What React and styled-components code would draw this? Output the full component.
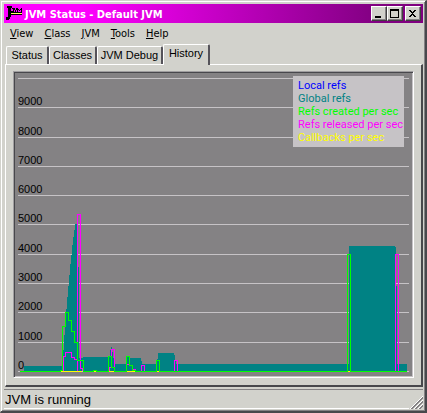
import React, { useState } from "react";
import styled, { createGlobalStyle, css } from "styled-components";

const FACE = "#d2d2cc";
const UI = `"Liberation Sans", Arial, sans-serif`;
const SHELL = `"DejaVu Sans Condensed", Tahoma, sans-serif`;

const GlobalStyle = createGlobalStyle`
  * { box-sizing: border-box; }
  html, body, #root { height: 100%; }
  body { margin: 0; background: ${FACE}; color: #000; font: 11px/13px ${UI}; }
  button { font: inherit; color: inherit; padding: 0; margin: 0; }
`;

const Window = styled.main`
  min-height: 100%;
  display: flex;
  flex-direction: column;
  padding: 2px 1px 0 2px;
  background: ${FACE};
  border: 1px solid #d2d2cc;
  border-right: 2px solid #48484c;
  border-bottom: 2px solid #48484c;
  box-shadow: inset 1px 1px #fff, inset -1px -1px #848284;
`;

const TitleBar = styled.header`
  display: flex;
  align-items: center;
  height: 19px;
  margin: 1px 1px 0;
  padding: 0 2px;
  background: linear-gradient(90deg, #ff00ff, #ff00ff 18%, #800080 90%);
  color: #fff;
`;

const Title = styled.h1`
  flex: 1;
  margin: 0 0 0 3px;
  padding-top: 1px;
  font: bold 11px/19px ${SHELL};
`;

const Caption = styled.div`
  display: flex;
`;

const CaptionButton = styled.button`
  display: block;
  width: 16px;
  height: 15px;
  margin-left: ${(p) => (p.$apart ? 2 : 0)}px;
  background: ${FACE};
  border: 1px solid;
  border-color: #fff #404040 #404040 #fff;
  box-shadow: inset -1px -1px #848284;
  svg { display: block; }
`;

const MenuBar = styled.nav`
  display: flex;
  height: 21px;
  gap: 11px;
  padding: 3px 7px;
`;

const MenuItem = styled.button`
  border: 0;
  background: none;
  font: 11px/15px ${SHELL};
`;

const TabRow = styled.div`
  display: flex;
  align-items: flex-end;
  height: 20px;
  margin: 0 3px;
`;

const Tab = styled.button`
  position: relative;
  height: 18px;
  width: ${(p) => p.$width}px;
  white-space: nowrap;
  background: ${FACE};
  border: 1px solid #fff;
  border-right: 2px solid #55535a;
  border-bottom: 0;
  border-radius: 2px 2px 0 0;
  font: 11px/17px ${UI};
  ${(p) =>
    p.$active &&
    css`
      height: 21px;
      margin-bottom: -1px;
      padding-bottom: 3px;
      z-index: 1;
    `}
`;

const Panel = styled.section`
  flex: 1;
  display: flex;
  margin: 0 1px 0 2px;
  padding: 6px 7px 7px;
  border: 1px solid #fff;
  border-right: 2px solid #48484c;
  border-bottom: 2px solid #48484c;
`;

const ChartFrame = styled.div`
  position: relative;
  flex: 1;
  padding: 1px;
  background: #848284;
  border: 1px solid;
  border-color: #a09ea0 #fff #fff #a09ea0;
  box-shadow: inset 1px 1px #48484c, inset -1px -1px #c6c3c6;
`;

const Chart = styled.svg`
  display: block;
  width: 100%;
  height: 100%;
  font: 11px ${UI};
`;

const Legend = styled.ul`
  position: absolute;
  top: 4px;
  right: 9px;
  margin: 0;
  padding: 3px 1px 3px 5px;
  list-style: none;
  background: #c6c3c6;
  font: 11px/13px Roboto, ${UI};
`;

const LegendItem = styled.li`
  color: ${(p) => p.$color};
  white-space: nowrap;
`;

const StatusBar = styled.footer`
  display: flex;
  height: 20px;
  margin: 2px 1px;
  border-top: 1px solid #848284;
`;

const StatusText = styled.span`
  flex: 1;
  padding-left: 1px;
  border-bottom: 1px solid #fff;
  font: 13px/19px ${UI};
`;

const Grip = styled.svg`
  align-self: flex-end;
`;

const AppIcon = () => (
  <svg width="16" height="16" viewBox="0 0 16 16" shapeRendering="crispEdges" aria-hidden="true">
    <path d="M1 0h5v2H5v9H4v2H3v1H0v-3h2V2H1z" fill="#000" />
    <path
      d="M6 2h2v4H5V5h2V3H6zM8 2h1v2h1V2h1v2h-1v2H9V4H8zM11 2h1v1h1v1h1V3h1V2h1v4h-1V4h-1v1h-1V4h-1v2h-1z"
      fill="#000"
    />
    <path d="M5 7h11v1H5z" fill="#ffff60" />
    <path d="M5 6h11v1H5zM5 8h11v1H5z" fill="#000" />
  </svg>
);

const glyphs = {
  Minimize: <path d="M3 9h6v2H3z" />,
  Maximize: <path fillRule="evenodd" d="M2 2h9v9H2zM3 4v6h7V4z" />,
  Close: <path d="M3 3h2v1h1v1h1V4h1V3h2v1H9v1H8v1H7v1h1v1h1v1h1v1H8V9H7V8H6v1H5v1H3V9h1V8h1V7h1V6H5V5H4V4H3z" />,
};

const menus = ["View", "Class", "JVM", "Tools", "Help"];
const tabs = [
  ["Status", 43],
  ["Classes", 48],
  ["JVM Debug", 66],
  ["History", 47],
];
const series = [
  ["Local refs", "#0000ff"],
  ["Global refs", "#008284"],
  ["Refs created per sec", "#00ff00"],
  ["Refs released per sec", "#ff00ff"],
  ["Callbacks per sec", "#ffff00"],
];
const gridLines = [78, 107, 137, 166, 195, 224, 254, 283, 312, 342, 371];

const HistoryChart = () => (
  <Chart viewBox="15 73 397 303" preserveAspectRatio="none" shapeRendering="crispEdges" role="img" aria-label="Reference history">
    <g fill="#c6c3c6">
      {gridLines.map((y) => (
        <rect key={y} x="18" y={y} width="391" height="1" />
      ))}
    </g>
    <path
      fill="#008284"
      d="M24 371V366H63V350H64V335H65V320H66V309H67V297H68V286H69V275H70V264H71V255H72V245H73V237H74V230H75V224H77V218H78V267H79V358H83V357H110V350H111V347H112V352H113V358H114V364H127V357H130V358H141V361H142V364H157V359H158V353H174V355H175V360H176V364H349V246H395V247H396V286H397V364H407V371Z"
    />
    <g fill="none" strokeWidth="1">
      <path
        stroke="#ff00ff"
        d="M63.5 371V356.500H65.500V352.500H71.500V357.500H74.500V359.500H77.500M77.500 371V214.500H80.500V368.500H82.500V371M109.500 371V367.500H111.500V349.500H114.500V371M126.500 364.500H129.500M132.500 369.500H135.500V371M141.500 371V365.500H144.500V371M174.500 371V360.500H177.500V371M395.500 371V254.500H398.500V371"
      />
      <path
        stroke="#00ff00"
        d="M20 371.500H60V370.500H62.500V326.500H65.500V312.500H68.500V320.500H71.500V331.500H74.500V342.500H77.500V360.500H83.500V371.500H93.500V370.500H96.500V371.500H108.500V356.500H111.500V367.500H114.500V371.500H126.500V356.500H129.500V365.500H132.500V370.500H135.500V371.500H156.500V360.500H159.500V371.500H347.500V254.500H350.500V371.500H407"
      />
      <path stroke="#ffff00" d="M61 371.500H82M94 371.500H96M109 371.500H114M127 371.500H135M157 371.500H159M348 371.500H350" />
    </g>
    {gridLines.slice(1).map((y, i) => (
      <text key={y} x="18" y={y - 2}>
        {(9 - i) * 1000}
      </text>
    ))}
  </Chart>
);

export default function App() {
  const [active, setActive] = useState("History");
  return (
    <>
      <GlobalStyle />
      <Window>
        <TitleBar>
          <AppIcon />
          <Title>JVM Status - Default JVM</Title>
          <Caption>
            {Object.entries(glyphs).map(([name, glyph]) => (
              <CaptionButton key={name} aria-label={name} $apart={name === "Close"}>
                <svg width="13" height="13" viewBox="0 0 13 13" shapeRendering="crispEdges">
                  {glyph}
                </svg>
              </CaptionButton>
            ))}
          </Caption>
        </TitleBar>
        <MenuBar>
          {menus.map((m) => (
            <MenuItem key={m}>
              <u>{m[0]}</u>
              {m.slice(1)}
            </MenuItem>
          ))}
        </MenuBar>
        <TabRow role="tablist">
          {tabs.map(([name, width]) => (
            <Tab
              key={name}
              role="tab"
              aria-selected={active === name}
              $active={active === name}
              $width={width}
              onClick={() => setActive(name)}
            >
              {name}
            </Tab>
          ))}
        </TabRow>
        <Panel role="tabpanel">
          <ChartFrame>
            <HistoryChart />
            <Legend>
              {series.map(([name, color]) => (
                <LegendItem key={name} $color={color}>
                  {name}
                </LegendItem>
              ))}
            </Legend>
          </ChartFrame>
        </Panel>
        <StatusBar>
          <StatusText role="status">JVM is running</StatusText>
          <Grip width="14" height="14" viewBox="0 0 14 14" aria-hidden="true">
            <path d="M1 14L14 1M5 14L14 5M9 14L14 9" stroke="#fff" />
            <path d="M2 14L14 2M3 14L14 3M6 14L14 6M7 14L14 7M10 14L14 10M11 14L14 11" stroke="#848284" />
          </Grip>
        </StatusBar>
      </Window>
    </>
  );
}
